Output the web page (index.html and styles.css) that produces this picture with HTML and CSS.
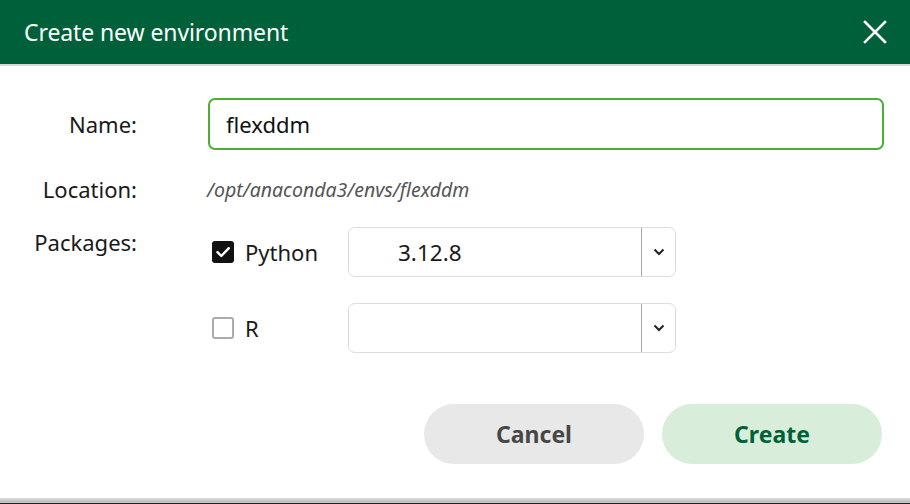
FILE: index.html
```html
<!DOCTYPE html>
<html>
<head>
<meta charset="utf-8">
<link rel="stylesheet" href="styles.css">
</head>
<body>
<div class="dialog">
  <header class="header">
    <span class="title">Create new environment</span>
    <svg class="close" width="24" height="24" viewBox="0 0 24 24"><path d="M2 2L22 22M22 2L2 22" stroke="#fff" stroke-width="2.6" stroke-linecap="square" fill="none"/></svg>
  </header>
  <div class="form">
    <div class="row row-name">
      <div class="label">Name:</div>
      <div class="input">flexddm</div>
    </div>
    <div class="row row-loc">
      <div class="label">Location:</div>
      <div class="loc">/opt/anaconda3/envs/flexddm</div>
    </div>
    <div class="row row-pkg">
      <div class="label">Packages:</div>
      <div class="pkgs">
        <div class="pkg">
          <span class="cb checked"><svg width="22" height="22" viewBox="0 0 22 22"><path d="M5.5 11.2L9.3 15L16.8 7.2" stroke="#fff" stroke-width="2.4" fill="none" stroke-linecap="round" stroke-linejoin="round"/></svg></span>
          <span class="pkg-name">Python</span>
        </div>
        <div class="select">
          <span class="sel-val">3.12.8</span>
          <span class="sel-btn"><svg width="12" height="8" viewBox="0 0 12 8"><path d="M1.5 1.5L6 6L10.5 1.5" stroke="#222" stroke-width="2" fill="none"/></svg></span>
        </div>
        <div class="pkg">
          <span class="cb"></span>
          <span class="pkg-name">R</span>
        </div>
        <div class="select">
          <span class="sel-val"></span>
          <span class="sel-btn"><svg width="12" height="8" viewBox="0 0 12 8"><path d="M1.5 1.5L6 6L10.5 1.5" stroke="#222" stroke-width="2" fill="none"/></svg></span>
        </div>
      </div>
    </div>
    <div class="buttons">
      <button class="btn cancel">Cancel</button>
      <button class="btn create">Create</button>
    </div>
  </div>
</div>
<div class="strip"></div>
</body>
</html>
```
FILE: styles.css
```css
html, body {
  margin: 0;
  padding: 0;
  background: #fff;
  font-family: "Noto Sans", "Open Sans", sans-serif;
  color: #1a1a1a;
  overflow: hidden;
}
.dialog {
  height: 498px;
  display: flex;
  flex-direction: column;
}
.header {
  height: 64px;
  background: #00603a;
  border-bottom: 2px solid #d8d8d8;
  display: flex;
  align-items: center;
  justify-content: space-between;
  padding: 0 23px 0 24px;
}
.title {
  color: #fff;
  font-size: 23px;
  letter-spacing: -0.1px;
}
.close { display: block; }
.form {
  padding-top: 32px;
  display: flex;
  flex-direction: column;
}
.row {
  display: grid;
  grid-template-columns: 137px 1fr;
  column-gap: 71px;
  padding-right: 26px;
}
.label {
  text-align: right;
  font-size: 22px;
  color: #1a1a1a;
  white-space: nowrap;
}
.row-name { height: 52px; align-items: center; }
.input {
  height: 52px;
  box-sizing: border-box;
  border: 2px solid #4cae35;
  border-radius: 7px;
  padding-left: 16px;
  font-size: 22px;
  display: flex;
  align-items: center;
  color: #111;
}
.row-loc { margin-top: 24px; height: 28px; align-items: center; }
.loc {
  font-size: 19.5px;
  font-style: italic;
  color: #555;
  margin-left: -1px;
}
.row-pkg { margin-top: 25px; }
.row-pkg .label { line-height: 30px; }
.pkgs {
  display: grid;
  grid-template-columns: 140px 328px;
  grid-auto-rows: 50px;
  row-gap: 26px;
}
.pkg {
  display: flex;
  align-items: center;
  padding-left: 4px;
}
.cb {
  width: 22px;
  height: 22px;
  box-sizing: border-box;
  border: 2px solid #ababab;
  border-radius: 3px;
  margin-right: 11px;
  display: inline-block;
}
.cb.checked {
  background: #111;
  border-color: #111;
  border-width: 0;
}
.cb svg { display: block; }
.pkg-name { font-size: 22px; }
.select {
  box-sizing: border-box;
  height: 50px;
  border: 1.5px solid #dcdcdc;
  border-radius: 7px;
  display: flex;
  align-items: stretch;
}
.sel-val {
  flex: 1;
  padding-left: 49px;
  font-size: 22.5px;
  display: flex;
  align-items: center;
  border-right: 1.5px solid #a8a8a8;
}
.sel-btn {
  width: 33px;
  display: flex;
  align-items: center;
  justify-content: center;
}
.sel-btn svg { display: block; }
.buttons {
  margin-top: 51px;
  display: flex;
  justify-content: flex-end;
  gap: 18px;
  padding-right: 28px;
}
.btn {
  width: 220px;
  height: 60px;
  border: none;
  border-radius: 30px;
  font-family: "Noto Sans", "Open Sans", sans-serif;
  font-size: 23px;
  font-weight: 700;
}
.cancel { background: #e8e8e8; color: #474747; }
.create { background: #d8eeda; color: #00603a; }
.strip {
  height: 6px;
  box-sizing: border-box;
  border-top: 2px solid #d6d6d6;
  border-bottom: 1px solid #222;
  background: #c4c4c4;
}
```
